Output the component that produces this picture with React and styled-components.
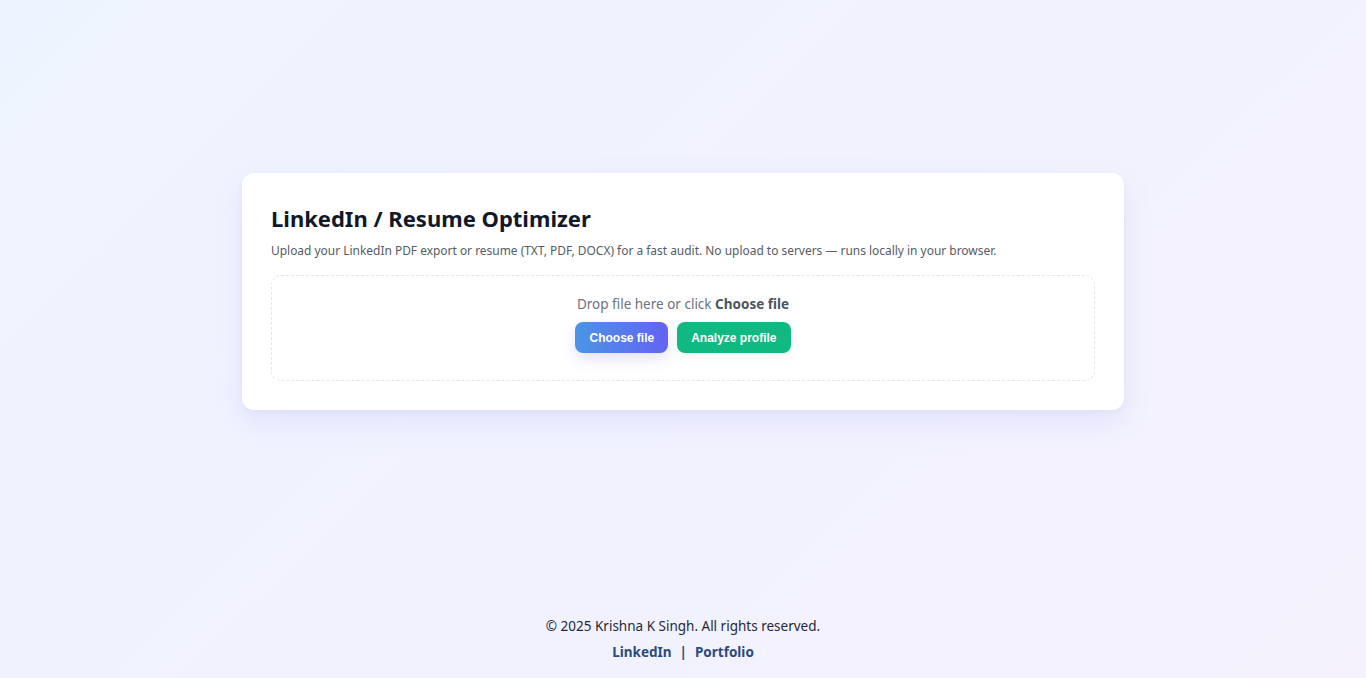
import styled, { createGlobalStyle } from "styled-components";

const GlobalStyle = createGlobalStyle`
  html, body {
    margin: 0;
    padding: 0;
  }
  body {
    font-family: "Noto Sans", "Open Sans", sans-serif;
    background: linear-gradient(135deg, #eef4ff 0%, #f1f2fe 50%, #f5f2fe 100%);
    color: #111827;
    min-height: 100vh;
  }
  #root {
    min-height: 100vh;
  }
`;

const Page = styled.div`
  min-height: 100vh;
  display: flex;
  flex-direction: column;
`;

const Main = styled.main`
  flex: 1;
  display: flex;
  align-items: center;
  justify-content: center;
  padding-bottom: 33px;
`;

const Card = styled.section`
  width: 882px;
  box-sizing: border-box;
  background: #ffffff;
  border-radius: 12px;
  padding: 29px;
  box-shadow: 0 12px 32px rgba(99, 102, 241, 0.1), 0 2px 6px rgba(15, 23, 42, 0.04);
`;

const Title = styled.h1`
  margin: 0;
  font-size: 22px;
  font-weight: 700;
  color: #111827;
  line-height: 32px;
`;

const Subtitle = styled.p`
  margin: 8px 0 15px;
  font-size: 11.95px;
  color: #555b66;
  line-height: 18px;
`;

const DropZone = styled.div`
  border: 1px dashed #e3e6ec;
  border-radius: 10px;
  padding: 18px 16px 27px;
  display: flex;
  flex-direction: column;
  align-items: center;
  gap: 8px;
`;

const DropText = styled.div`
  font-size: 13.5px;
  color: #6b7280;
  line-height: 20px;

  strong {
    color: #4b5563;
    font-weight: 700;
  }
`;

const Actions = styled.div`
  display: flex;
  gap: 9px;
`;

const Button = styled.button`
  font-family: "Liberation Sans", Arial, sans-serif;
  font-size: 12px;
  font-weight: 700;
  color: #ffffff;
  border: none;
  border-radius: 8px;
  height: 31px;
  padding: 0 14px;
  cursor: pointer;
  background: ${(p) =>
    p.$variant === "green"
      ? "#10b981"
      : "linear-gradient(90deg, #4a95e6 0%, #6463f1 100%)"};
  box-shadow: ${(p) =>
    p.$variant === "green"
      ? "0 4px 12px rgba(16, 185, 129, 0.08)"
      : "0 6px 14px rgba(99, 102, 241, 0.18)"};
`;

const Footer = styled.footer`
  text-align: center;
  padding: 0 0 16px;
  font-size: 13.5px;
  color: #1f2937;
`;

const Copy = styled.div`
  line-height: 20px;
  margin-bottom: 6px;
`;

const Links = styled.div`
  line-height: 20px;
  font-weight: 700;
  color: #2b4a7d;

  a {
    color: #2b4a7d;
    text-decoration: none;
  }

  span {
    margin: 0 8px;
  }
`;

export default function App() {
  return (
    <Page>
      <GlobalStyle />
      <Main>
        <Card>
          <Title>LinkedIn / Resume Optimizer</Title>
          <Subtitle>
            Upload your LinkedIn PDF export or resume (TXT, PDF, DOCX) for a fast audit. No upload to
            servers — runs locally in your browser.
          </Subtitle>
          <DropZone>
            <DropText>
              Drop file here or click <strong>Choose file</strong>
            </DropText>
            <Actions>
              <Button>Choose file</Button>
              <Button $variant="green">Analyze profile</Button>
            </Actions>
          </DropZone>
        </Card>
      </Main>
      <Footer>
        <Copy>© 2025 Krishna K Singh. All rights reserved.</Copy>
        <Links>
          <a href="#">LinkedIn</a>
          <span>|</span>
          <a href="#">Portfolio</a>
        </Links>
      </Footer>
    </Page>
  );
}
